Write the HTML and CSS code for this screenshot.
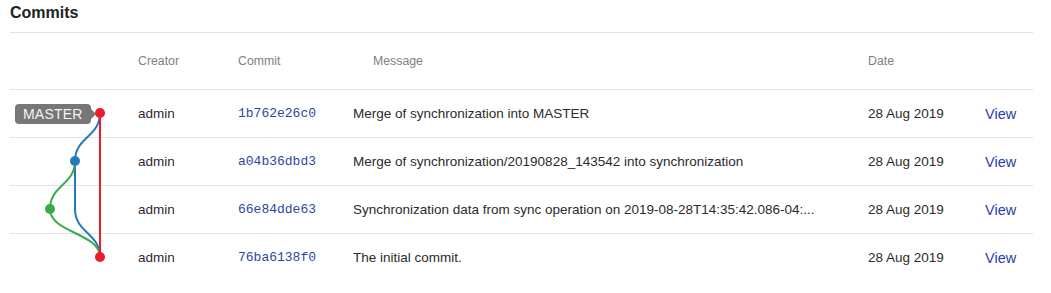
FILE: index.html
```
<!DOCTYPE html>
<html lang="en">
<head>
  <meta charset="UTF-8">
  <title>Commits</title>
  <link rel="stylesheet" href="styles.css">
</head>
<body>
<div class="panel">
  <h2 class="title">Commits</h2>

  <div class="row head">
    <span></span>
    <span>Creator</span>
    <span>Commit</span>
    <span class="msgHead">Message</span>
    <span>Date</span>
    <span></span>
  </div>

  <div class="row">
    <span class="graphCell"><span class="tag">MASTER</span></span>
    <span>admin</span>
    <span class="hash">1b762e26c0</span>
    <span class="msg">Merge of synchronization into MASTER</span>
    <span>28 Aug 2019</span>
    <a class="view" href="#">View</a>
  </div>
  <div class="row">
    <span></span>
    <span>admin</span>
    <span class="hash">a04b36dbd3</span>
    <span class="msg">Merge of synchronization/20190828_143542 into synchronization</span>
    <span>28 Aug 2019</span>
    <a class="view" href="#">View</a>
  </div>
  <div class="row">
    <span></span>
    <span>admin</span>
    <span class="hash">66e84dde63</span>
    <span class="msg">Synchronization data from sync operation on 2019-08-28T14:35:42.086-04:...</span>
    <span>28 Aug 2019</span>
    <a class="view" href="#">View</a>
  </div>
  <div class="row last">
    <span></span>
    <span>admin</span>
    <span class="hash">76ba6138f0</span>
    <span class="msg">The initial commit.</span>
    <span>28 Aug 2019</span>
    <a class="view" href="#">View</a>
  </div>

  <!-- commit graph, drawn over the first column -->
  <svg class="graph" width="130" height="293" viewBox="0 0 130 293">
    <g fill="none" stroke-width="2">
      <path d="M100 113 C100 137 75 137 75 161" stroke="#2479b9"/>
      <path d="M75 161 L75 209 C75 233 100 233 100 257" stroke="#2479b9"/>
      <path d="M75 161 C75 185 50 185 50 209" stroke="#3aaa48"/>
      <path d="M50 209 C50 233 100 233 100 257" stroke="#3aaa48"/>
      <path d="M100 113 L100 257" stroke="#ec1b2e"/>
    </g>
    <circle cx="100" cy="113" r="5" fill="#ec1b2e"/>
    <circle cx="75" cy="161" r="5" fill="#2479b9"/>
    <circle cx="50" cy="209" r="5" fill="#3aaa48"/>
    <circle cx="100" cy="257" r="5" fill="#ec1b2e"/>
  </svg>
</div>
</body>
</html>
```

FILE: styles.css
```
body {
  margin: 0;
  background: #fff;
  color: #2b2b2b;
  font-family: 'Liberation Sans', Arial, sans-serif;
  font-size: 13.5px;
}

.panel {
  position: relative;
  margin: 0 18px 0 10px;
}

.title {
  margin: 0;
  padding-bottom: 6px;
  font-size: 16px;
  line-height: 26px;
  font-weight: bold;
  color: #222;
  border-bottom: 1px solid #e2e2e2;
}

.row {
  display: grid;
  grid-template-columns: 128px 100px 115px 1fr 117px 48px;
  align-items: center;
  height: 47px;
  border-bottom: 1px solid #e2e2e2;
}

.row.last {
  border-bottom: none;
}

.head {
  height: 56px;
  color: #808080;
  font-size: 12.3px;
}

.msgHead {
  padding-left: 20px;
}

.hash {
  font-family: 'Liberation Mono', 'Courier New', monospace;
  font-size: 13px;
  color: #2f44a6;
}

.msg {
  white-space: nowrap;
  overflow: hidden;
  text-overflow: ellipsis;
  padding-right: 30px;
}

.view {
  color: #2840ad;
  font-size: 14.5px;
  text-decoration: none;
}

.graphCell {
  display: flex;
  padding-left: 5px;
}

.tag {
  position: relative;
  display: inline-block;
  height: 20px;
  line-height: 20px;
  padding: 0 8px;
  background: #777;
  color: #f4f4f4;
  font-size: 14px;
  letter-spacing: 0.2px;
  border-radius: 4px;
}

.tag:after {
  content: '';
  position: absolute;
  right: -5px;
  top: 4px;
  border-top: 6px solid transparent;
  border-bottom: 6px solid transparent;
  border-left: 6px solid #777;
}

.graph {
  position: absolute;
  left: -10px;
  top: 0;
  pointer-events: none;
}
```
